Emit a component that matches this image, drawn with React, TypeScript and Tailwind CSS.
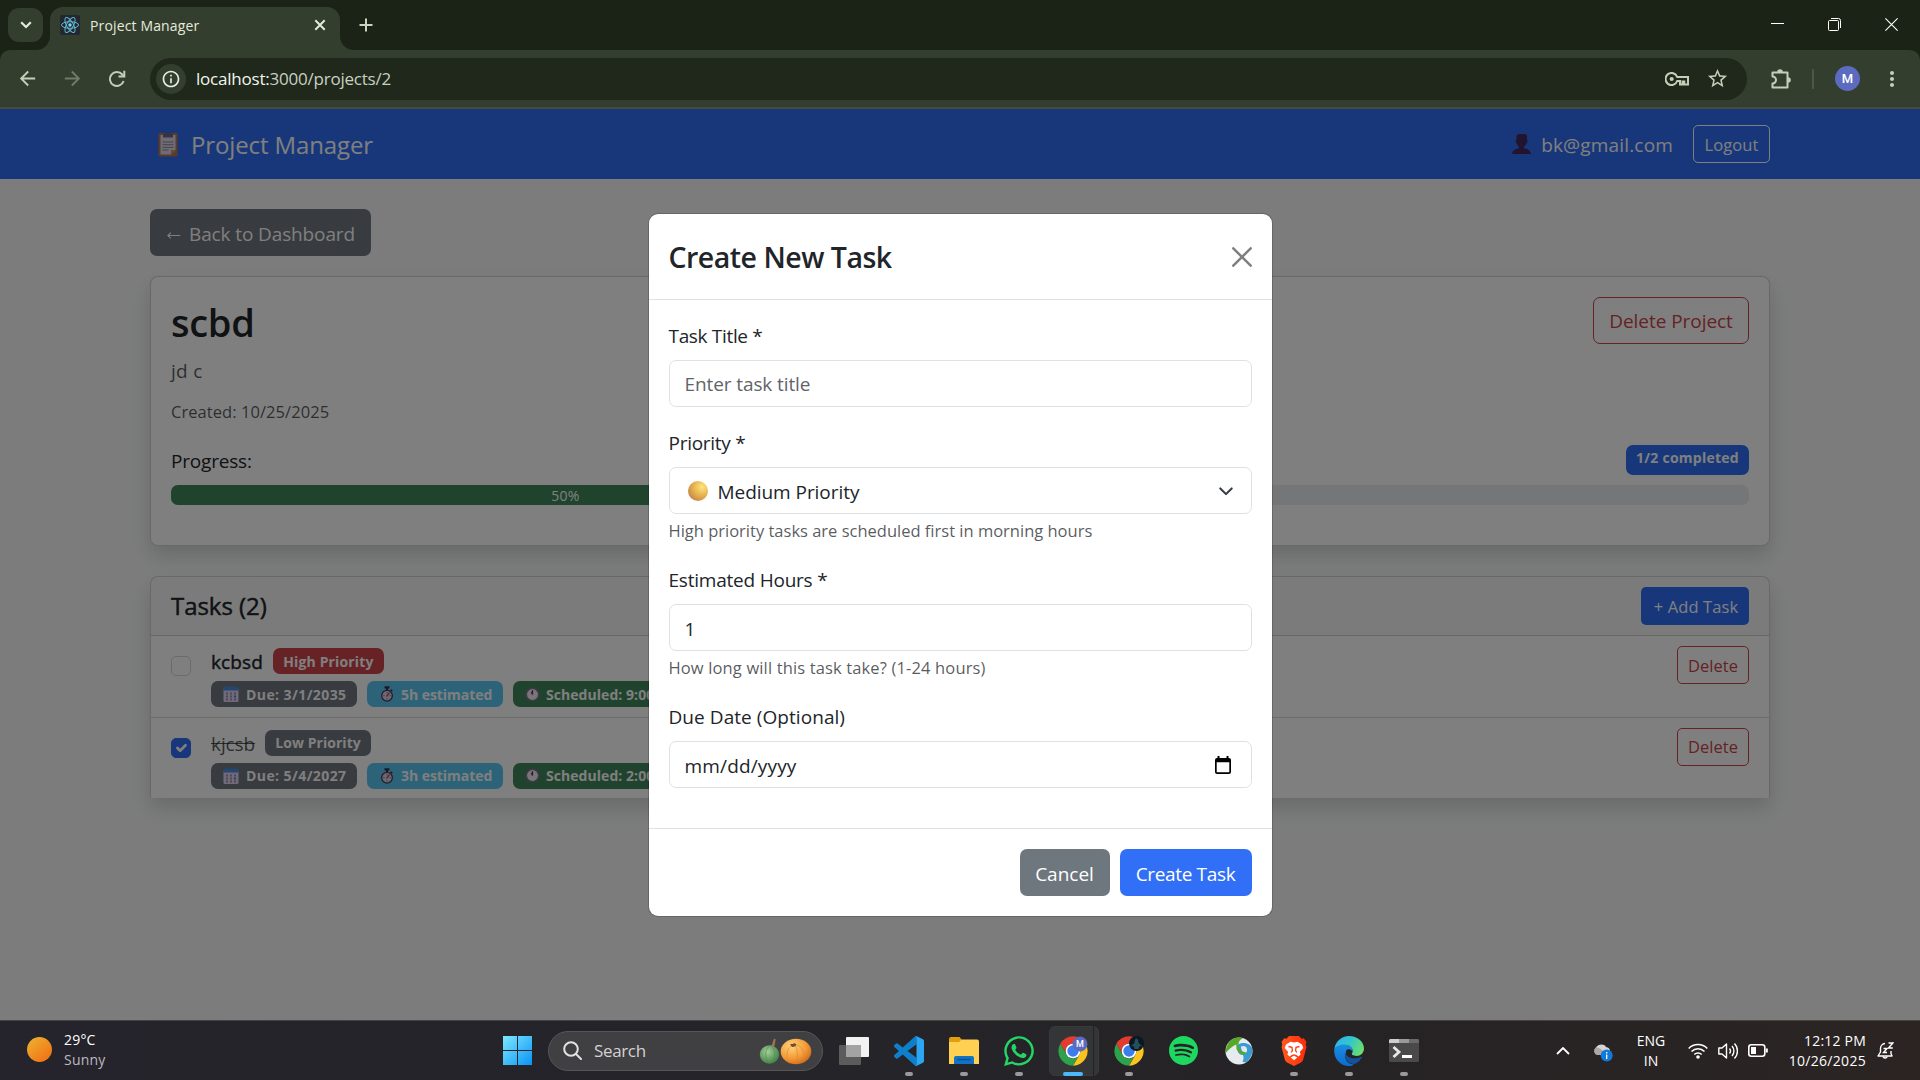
import type { ReactNode } from 'react';
import { MdArrowBack, MdArrowForward, MdInfoOutline, MdMoreVert, MdStarBorder } from 'react-icons/md';
import { FaWhatsapp } from 'react-icons/fa';
import { SiSpotify } from 'react-icons/si';

/* ---------- Browser chrome ---------- */

function ReactFavicon() {
  return (
    <svg viewBox="0 0 20 20" className="h-5 w-5 shrink-0 rounded-[2px] bg-[#23272f]">
      <g fill="none" stroke="#61b8d4" strokeWidth="1">
        <ellipse cx="10" cy="10" rx="8.5" ry="3.3" />
        <ellipse cx="10" cy="10" rx="8.5" ry="3.3" transform="rotate(60 10 10)" />
        <ellipse cx="10" cy="10" rx="8.5" ry="3.3" transform="rotate(120 10 10)" />
      </g>
      <circle cx="10" cy="10" r="1.7" fill="#7fd6ef" />
    </svg>
  );
}

function TabStrip() {
  return (
    <div className="flex h-[50px] items-start bg-[#1a2315] text-[#e4eadd]">
      <div className="ml-2 mt-2 flex h-[34px] w-[35px] items-center justify-center rounded-[11px] bg-[#343e2e]">
        <svg viewBox="0 0 12 8" className="h-2 w-3" fill="none" stroke="currentColor" strokeWidth="2.2">
          <path d="M1.2 1.2 6 6l4.800-4.800" />
        </svg>
      </div>
      <div className="relative ml-[7px] mt-[7px] h-[43px] w-[290px] rounded-t-[13px] bg-[#343e2e]">
        <svg viewBox="0 0 14 14" className="absolute -left-[14px] bottom-0 h-[14px] w-[14px]">
          <path d="M14 0v14H0A14 14 0 0 0 14 0Z" fill="#343e2e" />
        </svg>
        <svg viewBox="0 0 14 14" className="absolute -right-[14px] bottom-0 h-[14px] w-[14px]">
          <path d="M0 0v14h14A14 14 0 0 1 0 0Z" fill="#343e2e" />
        </svg>
        <div className="flex h-9 items-center pl-[10px] pr-[14px]">
          <ReactFavicon />
          <span className="ml-[10px] flex-1 pt-px text-[14px] leading-5 tracking-[0.14px]">Project Manager</span>
          <svg viewBox="0 0 12 12" className="h-3 w-3" stroke="currentColor" strokeWidth="2">
            <path d="m1.300 1.300 9.400 9.400M10.700 1.300l-9.400 9.400" />
          </svg>
        </div>
      </div>
      <svg viewBox="0 0 14 14" className="ml-[19px] mt-[18px] h-[14px] w-[14px]" stroke="#c9d6bf" strokeWidth="2">
        <path d="M7 .5v13M.5 7h13" />
      </svg>
      <div className="ml-auto mr-[22px] flex h-12 items-center gap-[44px] text-white">
        <svg viewBox="0 0 13 13" className="h-[13px] w-[13px]" stroke="currentColor">
          <path d="M0 5.500h13" />
        </svg>
        <svg viewBox="0 0 13 13" className="h-[13px] w-[13px]" fill="none" stroke="currentColor">
          <rect x=".5" y="2.500" width="10" height="10" rx="1" />
          <path d="M3 .5h7.500a2 2 0 0 1 2 2V10" />
        </svg>
        <svg viewBox="0 0 13 13" className="h-[13px] w-[13px]" stroke="currentColor" strokeWidth="1.100">
          <path d="m.4.4 12.200 12.200M12.600.4.400 12.600" />
        </svg>
      </div>
    </div>
  );
}

function Toolbar() {
  return (
    <div className="bg-[#1a2315]">
      <div className="flex h-[57px] items-center rounded-t-[10px] bg-[#343e2e] pl-4 pr-[16px] text-[#c3cfb9]">
        <MdArrowBack className="h-[23px] w-[23px]" />
        <MdArrowForward className="ml-[22px] h-[23px] w-[23px] text-[#707b68]" />
        <svg viewBox="0 0 18 18" className="ml-[24px] h-[18px] w-[18px]" fill="none" stroke="currentColor" strokeWidth="2">
          <path d="M15.600 11A7 7 0 1 1 14.300 4.500L15.500 6" />
          <path d="M10.500 6.600h5.800V.8" />
        </svg>
        <div className="ml-[24px] flex h-[42px] flex-1 items-center rounded-full bg-[#1f281b] pl-[6px] pr-[18px]">
          <div className="flex h-[30px] w-[30px] items-center justify-center rounded-full bg-[#343e2e] text-[#e8ede4]">
            <MdInfoOutline className="h-5 w-5" />
          </div>
          <span className="ml-[10px] pt-px text-[17px] leading-6 tracking-[-0.22px] text-[#c8d1c1]">
            <span className="text-[#f1f5ee]">localhost:</span>3000/projects/2
          </span>
          <svg viewBox="0 0 24 14" className="ml-auto h-[14px] w-6" fill="none" stroke="currentColor" strokeWidth="2">
            <path d="M12.200 5A6 6 0 1 0 12.200 9H15v3.500h2.500V9.500h1.800V12.500H23V5Z" />
            <circle cx="6.700" cy="7" r="2.100" fill="currentColor" stroke="none" />
          </svg>
          <MdStarBorder className="ml-[17px] h-[23px] w-[23px]" />
        </div>
        <svg viewBox="0 0 22 22" className="ml-[23px] h-[22px] w-[22px]" fill="none" stroke="currentColor" strokeWidth="2">
          <path d="M2.500 4.500H17.500V19.500H2.500V15.500A3.200 3.200 0 0 0 2.500 8.500Z" strokeLinejoin="round" />
          <path d="M7.200 4a2.800 2.800 0 0 1 5.600 0ZM18 9.200a2.800 2.800 0 0 1 0 5.600Z" fill="currentColor" stroke="none" />
        </svg>
        <div className="ml-[20px] h-5 w-[2px] bg-[#4b5845]" />
        <div className="ml-[21px] flex h-[25px] w-[25px] items-center justify-center rounded-full bg-[#5c6bc0] font-[Roboto] text-[13px] font-medium text-white">
          M
        </div>
        <MdMoreVert className="ml-[20px] h-6 w-6" />
      </div>
      <div className="h-[2px] bg-[#474a43]" />
    </div>
  );
}

/* ---------- Emoji-style glyphs ---------- */

function ClipboardGlyph() {
  return (
    <svg viewBox="0 0 20 25" className="h-[25px] w-5">
      <rect x=".5" y="1" width="19" height="23.500" rx="1.500" fill="#b8784c" />
      <path d="M2.500 3h15v15l-4.500 4.500H2.500Z" fill="#dfd8ea" />
      <path d="m13 22.500 0-4.500h4.500Z" fill="#c9935f" />
      <path d="M5 5.500V3a2 2 0 0 1 2-2h6a2 2 0 0 1 2 2v2.500Z" fill="#6f6780" />
      <path d="M4.500 10h11M4.500 12.700h11M4.500 15.400h11M4.500 18h6" stroke="#8f869f" />
    </svg>
  );
}

function PersonGlyph() {
  return (
    <svg viewBox="0 0 19 20" className="h-5 w-[19px]" fill="#45295f">
      <path d="M4.500 3a3 3 0 0 1 3-3h5a2.500 2.500 0 0 1 2.500 2.500V6c.8 0 .8 2.500-.2 2.500-.5 2-1.600 3.500-2.800 4.200v1.500c3.500.5 6.500 2 7 5.800H0c.5-3.800 3.500-5.300 7-5.800v-1.500C5.800 12 4.800 10.500 4.400 8.500c-1 0-1-2.500 0-2.500Z" />
    </svg>
  );
}

function CalendarGlyph() {
  return (
    <svg viewBox="0 0 16 16" className="h-4 w-4">
      <rect x=".5" y="2" width="15" height="14" rx="1.500" fill="#e2d6f0" />
      <path d="M.5 4.500v-2a2 2 0 0 1 2-2h11a2 2 0 0 1 2 2v2Z" fill="#4a8ce0" />
      <g fill="#9b8fb5">
        <path d="M3 6.500h2v2H3zM7 6.500h2v2H7zM11 6.500h2v2h-2zM3 9.500h2v2H3zM7 9.500h2v2H7zM3 12.500h2v2H3zM7 12.500h2v2H7zM11 12.500h2v2h-2z" />
      </g>
      <path d="M11 9.500h2v2h-2z" fill="#3c7fe0" />
    </svg>
  );
}

function StopwatchGlyph() {
  return (
    <svg viewBox="0 0 14 16" className="h-4 w-[14px]">
      <path d="M4.500.3h5v2.200H8v1.800H6V2.500H4.500ZM11.200 3.200l1.600 1.400-1 1.200-1.600-1.400Z" fill="#3d2f4f" />
      <circle cx="7" cy="9.700" r="6" fill="#4a3b5e" />
      <circle cx="7" cy="9.700" r="4.700" fill="#dcd4e6" />
      <path d="M7 6v1.500M7 12v1.500M3.200 9.700h1.400M9.400 9.700h1.400" stroke="#6d6080" strokeWidth=".8" />
      <path d="m6.500 10.500 3-3.800" stroke="#d4335e" strokeWidth="1.300" />
    </svg>
  );
}

function ClockGlyph() {
  return (
    <svg viewBox="0 0 16 16" className="h-[15px] w-[15px]">
      <circle cx="8" cy="8" r="7.500" fill="#80728c" />
      <circle cx="8" cy="8" r="5.800" fill="#f1edf5" />
      <path d="M8 8V3.500" stroke="#3a3044" strokeWidth="1.300" />
      <path d="m8 8-1.500-2.800" stroke="#c23a55" strokeWidth="1.400" />
    </svg>
  );
}

/* ---------- Page ---------- */

function Navbar() {
  return (
    <nav className="flex h-[70px] items-center bg-[#316ff6] pl-[158px] pr-[150px] text-white">
      <ClipboardGlyph />
      <span className="ml-[13px] pt-[2px] text-[24px] leading-[36px] tracking-[-0.12px]">Project Manager</span>
      <div className="ml-auto flex items-center">
        <PersonGlyph />
        <span className="ml-[10px] pt-[2px] text-[19px] leading-[30px] tracking-[0.17px]">bk@gmail.com</span>
        <button className="ml-5 h-[38px] w-[77px] rounded-[5px] border border-white pt-px text-[16.5px] leading-[26px] tracking-[0.1px]">
          Logout
        </button>
      </div>
    </nav>
  );
}

function Badge({ color, icon, children, className }: { color: string; icon?: ReactNode; children: ReactNode; className: string }) {
  return (
    <span className={`flex h-[26px] items-center rounded-[7px] text-[14px] font-bold leading-4 text-white ${color} ${className}`}>
      {icon}
      <span className="pt-px">{children}</span>
    </span>
  );
}

type Task = {
  title: string;
  done: boolean;
  priority: string;
  priorityClass: string;
  priorityColor: string;
  due: string;
  hours: string;
  time: string;
};

const tasks: Task[] = [
  {
    title: 'kcbsd',
    done: false,
    priority: 'High Priority',
    priorityColor: 'bg-[#ce444a]',
    priorityClass: 'w-[111px] tracking-[0.15px]',
    due: '3/1/2035',
    hours: '5h',
    time: '9:00 AM',
  },
  {
    title: 'kjcsb',
    done: true,
    priority: 'Low Priority',
    priorityColor: 'bg-[#70767f]',
    priorityClass: 'w-[106px] tracking-[0.05px]',
    due: '5/4/2027',
    hours: '3h',
    time: '2:00 PM',
  },
];

function TaskRow({ task }: { task: Task }) {
  return (
    <li className="flex h-[81.500px] items-start border-b border-black/15 bg-white px-5 pt-[10px] last:h-[80.500px] last:border-b-0">
      <div
        className={`mt-[10px] flex h-5 w-5 items-center justify-center rounded-[5px] border ${
          task.done ? 'border-[#316ff6] bg-[#316ff6]' : 'border-[#d3d7db] bg-white'
        }`}
      >
        {task.done && (
          <svg viewBox="0 0 20 20" className="h-5 w-5" fill="none" stroke="#fff" strokeWidth="3" strokeLinecap="round" strokeLinejoin="round">
            <path d="m6 10 3 3 6-6" />
          </svg>
        )}
      </div>
      <div className="ml-5 flex-1">
        <div className="flex h-[30px] items-center">
          <span
            className={
              task.done
                ? 'pt-[2px] text-[19px] leading-7 tracking-[-0.1px] text-[#212529bf] line-through'
                : 'pt-px text-[19px] leading-7 tracking-[0.1px] text-[#212529] [-webkit-text-stroke:0.4px_#212529]'
            }
          >
            {task.title}
          </span>
          <Badge color={task.priorityColor} className={`ml-[10px] justify-center ${task.priorityClass}`}>
            {task.priority}
          </Badge>
        </div>
        <div className="mt-[5px] flex gap-[10px]">
          <Badge color="bg-[#70767f]" icon={<CalendarGlyph />} className="w-[146px] gap-[7px] pl-3 tracking-[0.42px]">
            Due: {task.due}
          </Badge>
          <Badge color="bg-[#59c6f0]" icon={<StopwatchGlyph />} className="w-[136px] gap-[7px] pl-[13px] tracking-[-0.05px]">
            {task.hours} estimated
          </Badge>
          <Badge color="bg-[#40865a]" icon={<ClockGlyph />} className="gap-[6px] px-[12px] tracking-[0.05px]">
            Scheduled: {task.time}
          </Badge>
        </div>
      </div>
      <button className="h-[38px] w-[72px] rounded-[5px] border border-[#cb444a] pt-px text-[16.5px] leading-[26px] text-[#cb444a]">Delete</button>
    </li>
  );
}

function ProjectPage() {
  return (
    <main className="px-[150px] pt-[30px] text-[19px] text-[#212529]">
      <button className="flex h-[47px] w-[221px] items-center rounded-[7px] bg-[#70767f] pl-4 text-white">
        <svg viewBox="0 0 15 10" className="mr-[8px] mt-[5px] h-[9px] w-[15px]" fill="none" stroke="currentColor" strokeWidth="1.200">
          <path d="M15 5H1M4.500 1.800 1.200 5l3.300 3.200" />
        </svg>
        <span className="pt-[3px] tracking-[-0.12px]">Back to Dashboard</span>
      </button>

      <section className="mt-5 h-[269.500px] rounded-[8px] border border-black/[.175] bg-white p-5 shadow-[0_10px_20px_rgba(0,0,0,0.15)]">
        <div className="flex items-start justify-between">
          <div>
            <h2 className="h-[49px] pt-px text-[38px] font-semibold leading-[48px] tracking-[-0.3px]">scbd</h2>
            <p className="mt-[10px] h-[30px] leading-[30px] tracking-[0.3px] text-[#212529bf]">jd c</p>
            <p className="mt-[12.500px] h-[26px] text-[16.5px] leading-[26px] tracking-[0.06px] text-[#212529bf]">Created: 10/25/2025</p>
          </div>
          <button className="h-[47px] w-[156px] rounded-[7px] border border-[#cb444a] pt-[2px] tracking-[-0.05px] text-[#cb444a]">Delete Project</button>
        </div>
        <div className="mt-[20.500px] flex h-[30px] justify-between leading-[30px]">
          <span className="pt-px tracking-[-0.2px]">Progress:</span>
          <span className="h-[30px] w-[123px] rounded-[7px] bg-[#316ff6] pt-[5px] text-center text-[14px] font-bold leading-[15px] tracking-[0.25px] text-white">
            1/2 completed
          </span>
        </div>
        <div className="mt-[10px] h-5 overflow-hidden rounded-[7px] bg-[#e9ecef]">
          <div className="h-5 w-1/2 bg-[#40865a] text-center text-[14px] leading-[21px] tracking-[0.3px] text-white">50%</div>
        </div>
      </section>

      <section className="mt-[30.500px] rounded-t-[8px] border border-b-0 border-black/[.175] bg-white shadow-[0_10px_20px_rgba(0,0,0,0.15)]">
        <header className="flex h-[59px] items-center justify-between rounded-t-[7px] border-b border-black/[.175] bg-black/[.03] px-5">
          <h5 className="text-[24px] leading-[30px] tracking-[-0.05px] [-webkit-text-stroke:0.45px_#212529]">Tasks (2)</h5>
          <button className="h-[38px] w-[108px] rounded-[5px] bg-[#316ff6] pl-[2px] pt-px text-[16.5px] leading-[26px] tracking-[0.1px] text-white">
            + Add Task
          </button>
        </header>
        <ul>
          {tasks.map((task) => (
            <TaskRow key={task.title} task={task} />
          ))}
        </ul>
      </section>
    </main>
  );
}

const fieldClass = 'mt-[9px] flex h-[47px] w-full items-center rounded-[7px] border border-[#dee2e6] bg-white px-[15px] pt-px';
const labelClass = 'block h-[31px] pt-px';
const helpClass = 'mt-[4px] h-[26px] text-[16.5px] leading-[26px] text-[#212529bf]';

function CreateTaskModal() {
  return (
    <div className="h-[704px] w-[625px] rounded-[10px] border border-black/[.175] bg-white bg-clip-padding text-[19px] text-[#212529]">
      <div className="flex h-[86px] items-center justify-between border-b border-[#dee2e6] px-5">
        <h5 className="text-[28.5px] font-semibold leading-[38px] tracking-[-0.5px]">Create New Task</h5>
        <svg viewBox="0 0 20 20" className="h-5 w-5" stroke="#7f7f7f" strokeWidth="2.500" strokeLinecap="round">
          <path d="m1.300 1.300 17.400 17.400M18.700 1.300 1.300 18.700" />
        </svg>
      </div>
      <div className="h-[528px] p-5 leading-[30px]">
        <label className={`${labelClass} tracking-[-0.33px]`}>Task Title *</label>
        <input
          className={`${fieldClass} tracking-[-0.1px] outline-none placeholder:text-[#5f6469] placeholder:opacity-100`}
          placeholder="Enter task title"
        />

        <label className={`${labelClass} mt-5 tracking-[-0.28px]`}>Priority *</label>
        <div className={fieldClass}>
          <svg viewBox="0 0 20 20" className="-mt-px ml-[3px] h-5 w-5">
            <defs>
              <radialGradient id="ball" cx=".7" cy=".3" r=".85">
                <stop offset="0" stopColor="#ffe57a" />
                <stop offset=".6" stopColor="#dfa94a" />
                <stop offset="1" stopColor="#c07a50" />
              </radialGradient>
            </defs>
            <circle cx="10" cy="10" r="10" fill="url(#ball)" />
          </svg>
          <span className="ml-[10px] flex-1 pt-px tracking-[-0.05px]">Medium Priority</span>
          <svg viewBox="0 0 16 10" className="mr-[3px] h-[9px] w-[14px]" fill="none" stroke="#343a40" strokeWidth="2.300" strokeLinecap="round" strokeLinejoin="round">
            <path d="m1.500 1.500 6.500 6.500 6.500-6.500" />
          </svg>
        </div>
        <p className={helpClass}>High priority tasks are scheduled first in morning hours</p>

        <label className={`${labelClass} mt-5 tracking-[-0.22px]`}>Estimated Hours *</label>
        <div className={fieldClass}>
          <span className="pt-px">1</span>
        </div>
        <p className={`${helpClass} tracking-[0.14px]`}>How long will this task take? (1-24 hours)</p>

        <label className={`${labelClass} mt-5 tracking-[0.06px]`}>Due Date (Optional)</label>
        <div className={`${fieldClass} justify-between pr-5`}>
          <span className="pt-px tracking-[0.16px]">mm/dd/yyyy</span>
          <svg viewBox="0 0 16 18" className="-mt-px h-[18px] w-4" fill="#000">
            <path d="M2.500 0h2v2h7V0h2v2H14a2 2 0 0 1 2 2v12a2 2 0 0 1-2 2H2a2 2 0 0 1-2-2V4a2 2 0 0 1 2-2h.5ZM1.700 6.300v10h12.600v-10Z" />
          </svg>
        </div>
      </div>
      <div className="flex justify-end gap-[10px] border-t border-[#dee2e6] p-5 text-white">
        <button className="h-[47px] w-[90px] rounded-[7px] bg-[#6e767e] pt-[3px]">Cancel</button>
        <button className="h-[47px] w-[132px] rounded-[7px] bg-[#316ff6] pt-[3px] tracking-[-0.35px]">Create Task</button>
      </div>
    </div>
  );
}

/* ---------- Taskbar ---------- */

function ChromeIcon({ children }: { children?: ReactNode }) {
  return (
    <svg viewBox="0 0 30 30" className="h-[30px] w-[30px]">
      <g transform="scale(.6667) translate(-1.500 -1.500)">
        <path d="M4.950 13A22 22 0 0 1 43.050 13H24A11 11 0 0 0 14.470 29.500Z" fill="#e33b2e" />
        <path d="M43.050 13A22 22 0 0 1 24 46L33.530 29.500A11 11 0 0 0 24 13Z" fill="#fcc31e" />
        <path d="M24 46A22 22 0 0 1 4.950 13L14.470 29.500A11 11 0 0 0 33.530 29.500Z" fill="#2da14c" />
        <circle cx="24" cy="24" r="11" fill="#fff" />
        <circle cx="24" cy="24" r="8.500" fill="#3b7ded" />
      </g>
      {children}
    </svg>
  );
}

function AppCell({ children, running, active }: { children: ReactNode; running?: boolean; active?: boolean }) {
  return (
    <div className="flex h-[60px] w-[55px] items-center justify-center">
      <div
        className={
          active
            ? 'relative flex h-[50px] w-[50px] items-center justify-center rounded-[6px] border border-[#3a3a3b] bg-[#343536] pr-[2px]'
            : 'relative flex h-[50px] w-[50px] items-center justify-center'
        }
      >
        {active && <span className="absolute -top-px right-[4px] h-[50px] w-px bg-[#232324]" />}
        {children}
        {running && !active && <span className="absolute bottom-0 left-[21px] h-1 w-2 rounded-full bg-[#9a9a9a]" />}
        {active && <span className="absolute -bottom-px left-[13px] h-1 w-5 rounded-full bg-[#4cb8fb]" />}
      </div>
    </div>
  );
}

function WindowsIcon() {
  return (
    <svg viewBox="0 0 29 29" className="h-[29px] w-[29px]">
      <defs>
        <linearGradient id="win" x1="0" y1="0" x2="1" y2="1">
          <stop offset="0" stopColor="#7ee8ff" />
          <stop offset="1" stopColor="#0a93f5" />
        </linearGradient>
      </defs>
      <path d="M0 0h14v14H0zM15 0h14v14H15zM0 15h14v14H0zM15 15h14v14H15z" fill="url(#win)" />
    </svg>
  );
}

function SearchBox() {
  return (
    <div className="flex h-10 w-[275px] items-center rounded-full border border-[#58555a] bg-[#403f41] pl-[14px] pr-[10px]">
      <svg viewBox="0 0 19 19" className="h-[19px] w-[19px]" fill="none" stroke="#e4e2e4" strokeWidth="2" strokeLinecap="round">
        <circle cx="8" cy="8" r="6.800" />
        <path d="m13 13 5 5" />
      </svg>
      <span className="ml-[12px] text-[17px] leading-6 tracking-[-0.35px] text-[#d3d1d3]">Search</span>
      <svg viewBox="0 0 53 28" className="ml-auto h-7 w-[53px]">
        <defs>
          <radialGradient id="green" cx=".4" cy=".35" r=".7">
            <stop offset="0" stopColor="#a4cf9a" />
            <stop offset="1" stopColor="#3d7d43" />
          </radialGradient>
          <radialGradient id="orange" cx=".35" cy=".3" r=".8">
            <stop offset="0" stopColor="#ffd27a" />
            <stop offset=".6" stopColor="#f39a35" />
            <stop offset="1" stopColor="#c9611a" />
          </radialGradient>
        </defs>
        <path d="M12 9c2-2 1.500-5 3-7.500l1.800 1C15.500 5 17 7 14.500 10Z" fill="#9c7158" />
        <ellipse cx="10.500" cy="17.500" rx="9.700" ry="9.300" fill="url(#green)" />
        <path d="M11 8.500c-5 3-6 13-1 18M11.500 8.500c5 3 6 13 0 18" fill="none" stroke="#4f8b52" strokeWidth=".6" />
        <ellipse cx="37" cy="14.500" rx="15.300" ry="12.800" fill="url(#orange)" />
        <path d="M34 8c-7 3-8 13-3 18.500M36 8c3 5 3 14 1 19M38 8c7 2 9 13 5 17.500" fill="none" stroke="#e0862e" strokeWidth=".7" />
        <path d="M31 7.500c2-1 3 0 4-1.500l2.500 1.300c-.5 2-2.500 3-4.500 2.700Z" fill="#7a4a34" />
      </svg>
    </div>
  );
}

function TaskViewIcon() {
  return (
    <svg viewBox="0 0 30 28" className="h-7 w-[30px]">
      <rect y="8" width="22" height="20" rx="1" fill="#5c5b5c" />
      <rect x="7" width="23" height="20" rx="1" fill="#f2f2f2" />
      <path d="M7 8h15v12H7z" fill="#a3a3a3" />
    </svg>
  );
}

function VsCodeIcon() {
  return (
    <svg viewBox="0 0 24 24" className="h-[30px] w-[30px]">
      <path
        d="M18.210.21a1.494 1.494 0 0 0-1.705.29l-9.460 8.630-4.120-3.128a1 1 0 0 0-1.276.057L.327 7.261A1 1 0 0 0 .326 8.740L3.899 12 .326 15.260a1 1 0 0 0 .001 1.479L1.650 17.940a1 1 0 0 0 1.276.057l4.120-3.128 9.460 8.630a1.492 1.492 0 0 0 1.704.29L18.004 17.448 10.826 12l7.178-5.448Z"
        fill="#0f7fcb"
      />
      <path d="M18.210.21 23.150 2.587A1.500 1.500 0 0 1 24 3.939v16.121a1.500 1.500 0 0 1-.85 1.352l-4.940 2.377a1.500 1.500 0 0 1-1.704-.29c.6.500 1.498.1 1.498-.7V1.200c0-.8-.9-1.300-1.500-.7a1.500 1.500 0 0 1 1.706-.29Z" fill="#2aa6f2" />
    </svg>
  );
}

function FolderIcon() {
  return (
    <svg viewBox="0 0 30 27" className="h-[27px] w-[30px]">
      <path d="M0 2a2 2 0 0 1 2-2h8.500l2.500 3v7H0Z" fill="#e09f0b" />
      <path d="M0 5h10l2.500-2.500H28a2 2 0 0 1 2 2V27H0Z" fill="#ffd052" />
      <path d="M5 27v-6a2 2 0 0 1 2-2h16a2 2 0 0 1 2 2v6Z" fill="#1273c4" />
      <path d="M9 22.500h12" stroke="#0b4f94" strokeWidth="1.500" strokeLinecap="round" />
    </svg>
  );
}

function CamelIcon() {
  return (
    <svg viewBox="0 0 28 28" className="h-7 w-7">
      <circle cx="14" cy="14" r="13.500" fill="#e6ebef" />
      <path d="M.8 13C2 5 8 .5 14 .5c1.500 0 2.800.2 4 .6C14.500 3 13.500 5 13.500 7.500 10 7 6 10 .8 16Z" fill="#56a827" />
      <path d="M12.500 8C18 4 26 6.500 27.400 12c.3 5-2 10-6.400 13.300l-3.500-.3c1-2.500 1.500-4.500.5-7-4 .5-6.500-4-5.500-10Z" fill="#3a9bd0" />
      <path d="M16 9.500c3-1.500 5.500 0 6 2.500s-1 4-2.500 4-3.500-3-3.500-6.500Z" fill="#dfeaf0" />
      <path d="M12.500 7.500c-.5 5 2 9 8 9" fill="none" stroke="#56a827" strokeWidth="2.500" />
    </svg>
  );
}

function BraveIcon() {
  return (
    <svg viewBox="0 0 26 30" className="h-[30px] w-[26px]">
      <defs>
        <linearGradient id="brave" x1="0" x2="1">
          <stop offset="0" stopColor="#ff5a1f" />
          <stop offset="1" stopColor="#ff2a0a" />
        </linearGradient>
      </defs>
      <path d="M8 0h10l2.500 2.700 2.300-.5L25.500 6l-.8 2.500.8 2.500-3.300 12.500c-.5 1.500-1.200 2.200-2.200 3L13 30l-7-3.500c-1-.8-1.700-1.500-2.200-3L.5 11l.8-2.500L.5 6l2.700-3.800 2.300.5Z" fill="url(#brave)" />
      <path
        d="M13 6.500 9.500 5.800 5 8.500 3.700 12l3.500 4-.8 2.500 2.200 2 2-1.500L13 18.300l2.400.7 2 1.500 2.200-2-.8-2.500 3.500-4L21 8.500l-4.500-2.700Z"
        fill="#fff"
      />
      <path d="m7.500 10.500 3.500.8.400 3.200-1.200 1.800M18.500 10.500l-3.500.8-.4 3.200 1.200 1.800" fill="none" stroke="#ff3d14" strokeWidth="1.300" />
      <path d="m13 19.800 3.300 1.800L13 24.300l-3.300-2.700Z" fill="#fff" />
    </svg>
  );
}

function EdgeIcon() {
  return (
    <svg viewBox="0 0 30 30" className="h-[30px] w-[30px]">
      <defs>
        <linearGradient id="edgeTop" x1="0" y1=".2" x2="1" y2=".6">
          <stop offset="0" stopColor="#2cb4f0" />
          <stop offset=".5" stopColor="#35c6c8" />
          <stop offset="1" stopColor="#6be06a" />
        </linearGradient>
        <linearGradient id="edgeLow" x1="0" y1="0" x2="0" y2="1">
          <stop offset="0" stopColor="#1a8fe0" />
          <stop offset="1" stopColor="#0c6bd0" />
        </linearGradient>
      </defs>
      <path d="M.3 13C1.500 5.500 7.500 0 15 0c8.500 0 15 5.800 15 12.500 0 4.500-3.500 7.500-7.500 7.500-3 0-4.800-1-4.800-2 0-.8 1-1.200 1-3 0-3-3-6-7.200-6C6.500 9 2 11 .3 13Z" fill="url(#edgeTop)" />
      <path d="M.3 13C2 10 6 8.500 10.500 8.500c5 0 8.200 3 8.200 6.500 0 1.800-1 2.200-1 3-2-3-6.700-2-6.700 2 0 4.500 4 8.500 9 8.500C18.500 29.500 16.800 30 15 30 6.500 30-.8 22.500.3 13Z" fill="url(#edgeLow)" />
      <path d="M11 16c-1.500 6 3 12 9.500 12 3.500-1.500 6-4 7.500-6.500.3-.6-.3-1-.8-.7C20 24 12.500 22 11 16Z" fill="#14529c" />
      <path d="M12 14.500c1.500-1.800 5-1.500 6.200.8.200 1.200-.5 1.700-.5 2.700 0 1 1.800 2 4.800 2-4 2.500-11 1-10.500-5.500Z" fill="#232426" />
    </svg>
  );
}

function TerminalIcon() {
  return (
    <svg viewBox="0 0 30 23" className="h-[23px] w-[30px]">
      <rect width="30" height="23" rx="1.500" fill="#4a4a4a" />
      <path d="M0 4V1.500A1.500 1.500 0 0 1 1.500 0H10v4Z" fill="#cfcfcf" />
      <path d="M10 0h10v4H10z" fill="#9a9a9a" />
      <path d="M20 0h8.500A1.500 1.500 0 0 1 30 1.500V4H20Z" fill="#6a6a6a" />
      <path d="m4.500 8 5.500 5-5.500 5" fill="none" stroke="#e8e8e8" strokeWidth="2.800" />
      <path d="M13 17.500h10" stroke="#fff" strokeWidth="3" />
    </svg>
  );
}

function Tray() {
  return (
    <div className="ml-auto mr-[26px] flex items-center text-[14px] leading-5 text-white">
      <svg viewBox="0 0 14 8" className="h-2 w-[14px]" fill="none" stroke="currentColor" strokeWidth="1.800">
        <path d="m1 7 6-6 6 6" />
      </svg>
      <svg viewBox="0 0 21 18" className="ml-[22px] mt-[4px] h-[18px] w-[21px]">
        <path d="M4 10A4.200 4.200 0 0 1 4 3.500C6 0 12-.5 14 3c2.500.2 4 1.700 4 4 0 3-2 4-4 4H5Z" fill="#d6d4d4" />
        <path d="M4 3.500C6.500 3 10 5 14 11H5A4.200 4.200 0 0 1 4 3.500Z" fill="#a9a7a7" />
        <circle cx="14.700" cy="11.500" r="6" fill="#0f7ad8" />
        <path d="M14.700 8v1.500M14.700 10.500V15" stroke="#fff" strokeWidth="1.300" />
      </svg>
      <div className="ml-[23px] w-[30px] pt-px text-center">
        <div>ENG</div>
        <div>IN</div>
      </div>
      <svg viewBox="0 0 20 16" className="ml-[22px] h-4 w-5" fill="none" stroke="currentColor" strokeWidth="1.500">
        <path d="M.7 5.500a13 13 0 0 1 18.600 0M3.500 8.500a9 9 0 0 1 13 0M6.300 11.500a5.200 5.200 0 0 1 7.400 0" />
        <circle cx="10" cy="14" r="1.800" fill="currentColor" stroke="none" />
      </svg>
      <svg viewBox="0 0 20 18" className="ml-[10px] h-[18px] w-5" fill="none" stroke="currentColor" strokeWidth="1.400">
        <path d="M.8 6v6H4l4.500 4V2L4 6Z" strokeLinejoin="round" />
        <path d="M11.500 6.500a4 4 0 0 1 0 5M14 4a7.500 7.500 0 0 1 0 10M16.500 1.500a11 11 0 0 1 0 15" />
      </svg>
      <svg viewBox="0 0 20 13" className="ml-[10px] h-[13px] w-5" fill="none" stroke="currentColor" strokeWidth="1.600">
        <rect x=".8" y=".8" width="16" height="11.400" rx="2.500" />
        <path d="M3 3h5v7H3z" fill="currentColor" stroke="none" />
        <path d="M18.800 4.500v4" strokeWidth="2" />
      </svg>
      <div className="ml-[18px] w-20 text-right">
        <div className="tracking-[0.2px]">12:12 PM</div>
        <div className="tracking-[0.3px]">10/26/2025</div>
      </div>
      <svg viewBox="0 0 17 18" className="ml-[11px] h-[18px] w-[17px]" fill="none" stroke="currentColor" strokeWidth="1.400">
        <path d="M8 1.500a5 5 0 0 0-4.500 5V10L1 14h14l-1-2.500V9" strokeLinejoin="round" />
        <path d="M6 14.500a2.200 2.200 0 0 0 4.200 0M6.500 6.500H10L6.500 10.500H10M11.500 1H15.800L11.500 6H15.800" />
      </svg>
    </div>
  );
}

function Taskbar() {
  return (
    <div className="flex h-[60px] items-center border-t border-[#43433f] bg-[linear-gradient(90deg,#25232b_0%,#252429_45%,#252325_65%,#2b2423_100%)]">
      <div className="flex w-[490px] items-center pl-[27px] pb-[2px]">
        <div className="h-[25px] w-[25px] rounded-full bg-[linear-gradient(140deg,#edb431,#f26a12)]" />
        <div className="ml-3 text-[14px] leading-5 tracking-[0.2px]">
          <div className="text-white">29°C</div>
          <div className="text-[#bdbac0]">Sunny</div>
        </div>
      </div>
      <div className="flex w-[55px] justify-center">
        <WindowsIcon />
      </div>
      <div className="ml-[3px] mr-[3px]">
        <SearchBox />
      </div>
      <AppCell>
        <TaskViewIcon />
      </AppCell>
      <AppCell running>
        <VsCodeIcon />
      </AppCell>
      <AppCell running>
        <FolderIcon />
      </AppCell>
      <AppCell running>
        <FaWhatsapp className="h-[34px] w-[34px] text-[#25d366]" />
      </AppCell>
      <AppCell active>
        <ChromeIcon>
          <circle cx="22" cy="8" r="7.500" fill="#5c6bc0" />
          <text x="22" y="11.200" fontSize="9" fontFamily="Roboto" fontWeight="500" textAnchor="middle" fill="#fff">
            M
          </text>
        </ChromeIcon>
      </AppCell>
      <AppCell running>
        <ChromeIcon>
          <circle cx="22.500" cy="7.500" r="7.500" fill="#0a1820" />
          <path d="M22.500 2.500c1.500 0 2 3 2 4.500l4 3.500-3-.5-1 3h-4l-1-3-3 .5 4-3.500c0-1.500.5-4.500 2-4.500Z" fill="#23505f" />
        </ChromeIcon>
      </AppCell>
      <AppCell>
        <SiSpotify className="h-[29px] w-[29px] text-[#1ed760]" />
      </AppCell>
      <AppCell>
        <CamelIcon />
      </AppCell>
      <AppCell running>
        <BraveIcon />
      </AppCell>
      <AppCell running>
        <EdgeIcon />
      </AppCell>
      <AppCell running>
        <TerminalIcon />
      </AppCell>
      <Tray />
    </div>
  );
}

export default function App() {
  return (
    <div className="flex h-[1080px] w-[1920px] flex-col overflow-hidden whitespace-nowrap font-['Open_Sans','Noto_Sans',sans-serif]">
      <TabStrip />
      <Toolbar />
      <div className="relative h-[911px] overflow-hidden bg-[#f8f9fa]">
        <Navbar />
        <ProjectPage />
        <div className="absolute inset-0 flex items-start justify-center bg-black/50 pt-[104px]">
          <CreateTaskModal />
        </div>
      </div>
      <Taskbar />
    </div>
  );
}
